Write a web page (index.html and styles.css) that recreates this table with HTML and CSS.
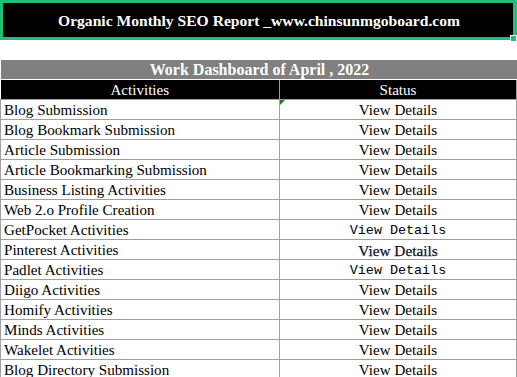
FILE: index.html
```html
<!DOCTYPE html>
<html>
<head>
<meta charset="utf-8">
<link rel="stylesheet" href="styles.css">
</head>
<body>
<div class="page">
  <header class="banner">
    <h1 class="banner-title">Organic Monthly SEO Report _www.chinsunmgoboard.com</h1>
    <span class="handle"></span>
  </header>
  <div class="spacer"></div>
  <table class="sheet">
    <colgroup><col class="col-act"><col class="col-status"></colgroup>
    <tr class="title-row"><td colspan="2">Work Dashboard of April , 2022</td></tr>
    <tr class="head-row"><td>Activities</td><td class="status">Status</td></tr>
    <tr><td>Blog Submission</td><td class="status marked">View Details<span class="flag"></span></td></tr>
    <tr><td>Blog Bookmark Submission</td><td class="status">View Details</td></tr>
    <tr><td>Article Submission</td><td class="status">View Details</td></tr>
    <tr><td>Article Bookmarking Submission</td><td class="status">View Details</td></tr>
    <tr><td>Business Listing Activities</td><td class="status">View Details</td></tr>
    <tr><td>Web 2.o Profile Creation</td><td class="status">View Details</td></tr>
    <tr><td>GetPocket Activities</td><td class="status mono">View Details</td></tr>
    <tr><td>Pinterest Activities</td><td class="status times">View Details</td></tr>
    <tr><td>Padlet Activities</td><td class="status mono">View Details</td></tr>
    <tr><td>Diigo Activities</td><td class="status">View Details</td></tr>
    <tr><td>Homify Activities</td><td class="status">View Details</td></tr>
    <tr><td>Minds Activities</td><td class="status">View Details</td></tr>
    <tr><td>Wakelet Activities</td><td class="status">View Details</td></tr>
    <tr><td>Blog Directory Submission</td><td class="status">View Details</td></tr>
  </table>
</div>
</body>
</html>
```

FILE: styles.css
```css
html, body {
  margin: 0;
  padding: 0;
  background: #ffffff;
}
.page {
  width: 517px;
  height: 377px;
  overflow: hidden;
  position: relative;
}
.banner {
  position: relative;
  box-sizing: border-box;
  height: 40px;
  width: 517px;
  border: 3px solid #1fbf78;
  border-right-width: 4px;
  background: #000000;
  display: flex;
  align-items: center;
  justify-content: center;
}
.banner-title {
  margin: 0;
  font-family: "Liberation Serif", serif;
  font-weight: bold;
  font-size: 15.6px;
  color: #ffffff;
  padding-left: 2px;
  padding-top: 1px;
}
.handle {
  position: absolute;
  right: -4px;
  bottom: -5px;
  width: 5px;
  height: 5px;
  background: #1fbf78;
  border: 1px solid #ffffff;
}
.spacer {
  height: 20px;
}
.sheet {
  border-collapse: collapse;
  table-layout: fixed;
  width: 516px;
  font-family: "Liberation Serif", serif;
  font-size: 15.1px;
  color: #000000;
}
.col-act { width: 279px; }
.col-status { width: 237px; }
.sheet td {
  height: 17px;
  line-height: 17px;
  padding: 2px 0 0 3px;
  border: 1px solid #9f9f9f;
  white-space: nowrap;
  overflow: hidden;
  vertical-align: top;
}
.sheet .title-row td {
  background: #808080;
  color: #ffffff;
  font-weight: bold;
  font-size: 16px;
  text-align: center;
  border: none;
  border-bottom: 1px solid #ffffff;
  height: 18px;
  line-height: 18px;
  padding: 1px 0 0 2px;
}
.sheet .head-row td {
  background: #000000;
  color: #ffffff;
  text-align: center;
  border-top: none;
  border-left: none;
  padding: 1px 0 0 0;
  height: 18px;
  line-height: 18px;
}
.sheet .head-row td.status {
  border-left: 1px solid #ffffff;
}
.sheet td.status {
  text-align: center;
  padding-left: 0;
  position: relative;
}
.sheet td.mono {
  font-family: "Liberation Mono", monospace;
  font-size: 13.4px;
}
.sheet td.times {
  font-family: "Liberation Serif", serif;
  font-size: 15.3px;
  color: #10122a;
  -webkit-text-stroke: 0.25px #10122a;
}
.flag {
  position: absolute;
  left: 0;
  top: 0;
  width: 0;
  height: 0;
  border-top: 5px solid #1b7f1b;
  border-right: 5px solid transparent;
}
```
